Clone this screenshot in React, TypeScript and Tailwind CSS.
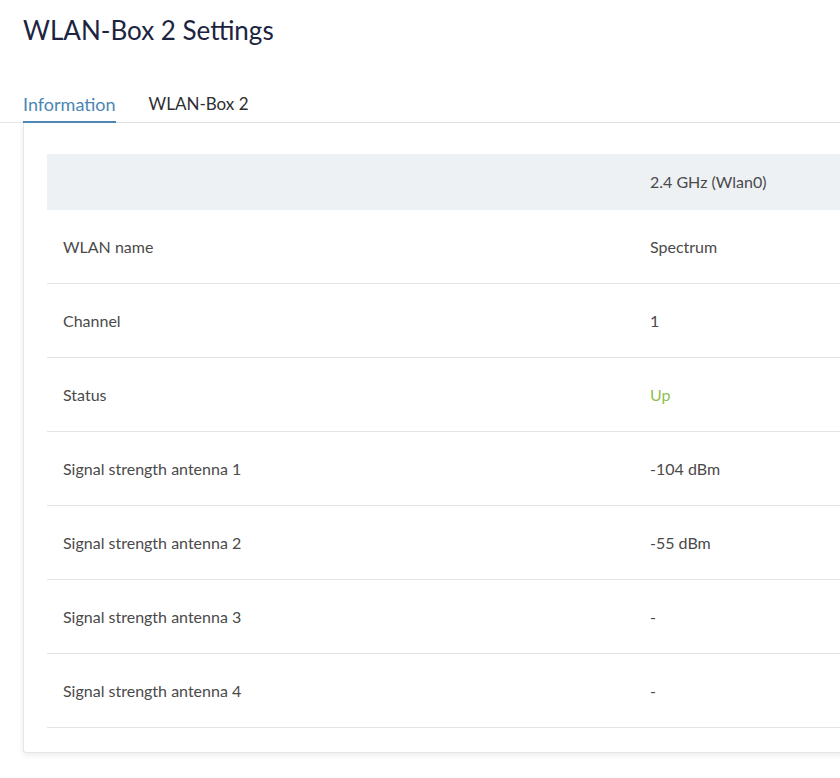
import React from "react";

const rows: { label: string; value: string; green?: boolean }[] = [
  { label: "WLAN name", value: "Spectrum" },
  { label: "Channel", value: "1" },
  { label: "Status", value: "Up", green: true },
  { label: "Signal strength antenna 1", value: "-104 dBm" },
  { label: "Signal strength antenna 2", value: "-55 dBm" },
  { label: "Signal strength antenna 3", value: "-" },
  { label: "Signal strength antenna 4", value: "-" },
];

export default function App() {
  return (
    <div className="w-[840px] h-[778px] overflow-hidden bg-white text-[#4a4a4a]" style={{ fontFamily: "Lato, 'Open Sans', sans-serif" }}>
      <h1 className="pl-[23px] pt-[12px] text-[26px] leading-[36px] text-[#1b2440]">WLAN-Box 2 Settings</h1>

      <div className="mt-[44px] flex gap-[33px] pl-[23px] border-b border-[#e2e5e8] w-[1100px]">
        <div className="pb-[5px] text-[18px] leading-[24px] text-[#4b86b4] border-b-2 border-[#4b86b4] -mb-px">Information</div>
        <div className="pb-[5px] text-[17px] leading-[24px] text-[#2e2e33]">WLAN-Box 2</div>
      </div>

      <div className="ml-[23px] w-[1100px] bg-white border-l border-b border-[#e6e6e6] rounded-bl-[3px] shadow-[0_2px_6px_rgba(0,0,0,0.08)] pt-[31px] pb-[24px] pl-[23px]">
        <div className="grid grid-cols-[603px_1fr] h-[56px] items-center bg-[#edf1f4] text-[16px]">
          <div />
          <div>2.4 GHz (Wlan0)</div>
        </div>
        {rows.map((r) => (
          <div key={r.label} className="grid grid-cols-[603px_1fr] h-[74px] items-center border-b border-[#e3e3e3] text-[16px]">
            <div className="pl-[16px]">{r.label}</div>
            <div className={r.green ? "text-[#8fbf4e]" : ""}>{r.value}</div>
          </div>
        ))}
      </div>
    </div>
  );
}
